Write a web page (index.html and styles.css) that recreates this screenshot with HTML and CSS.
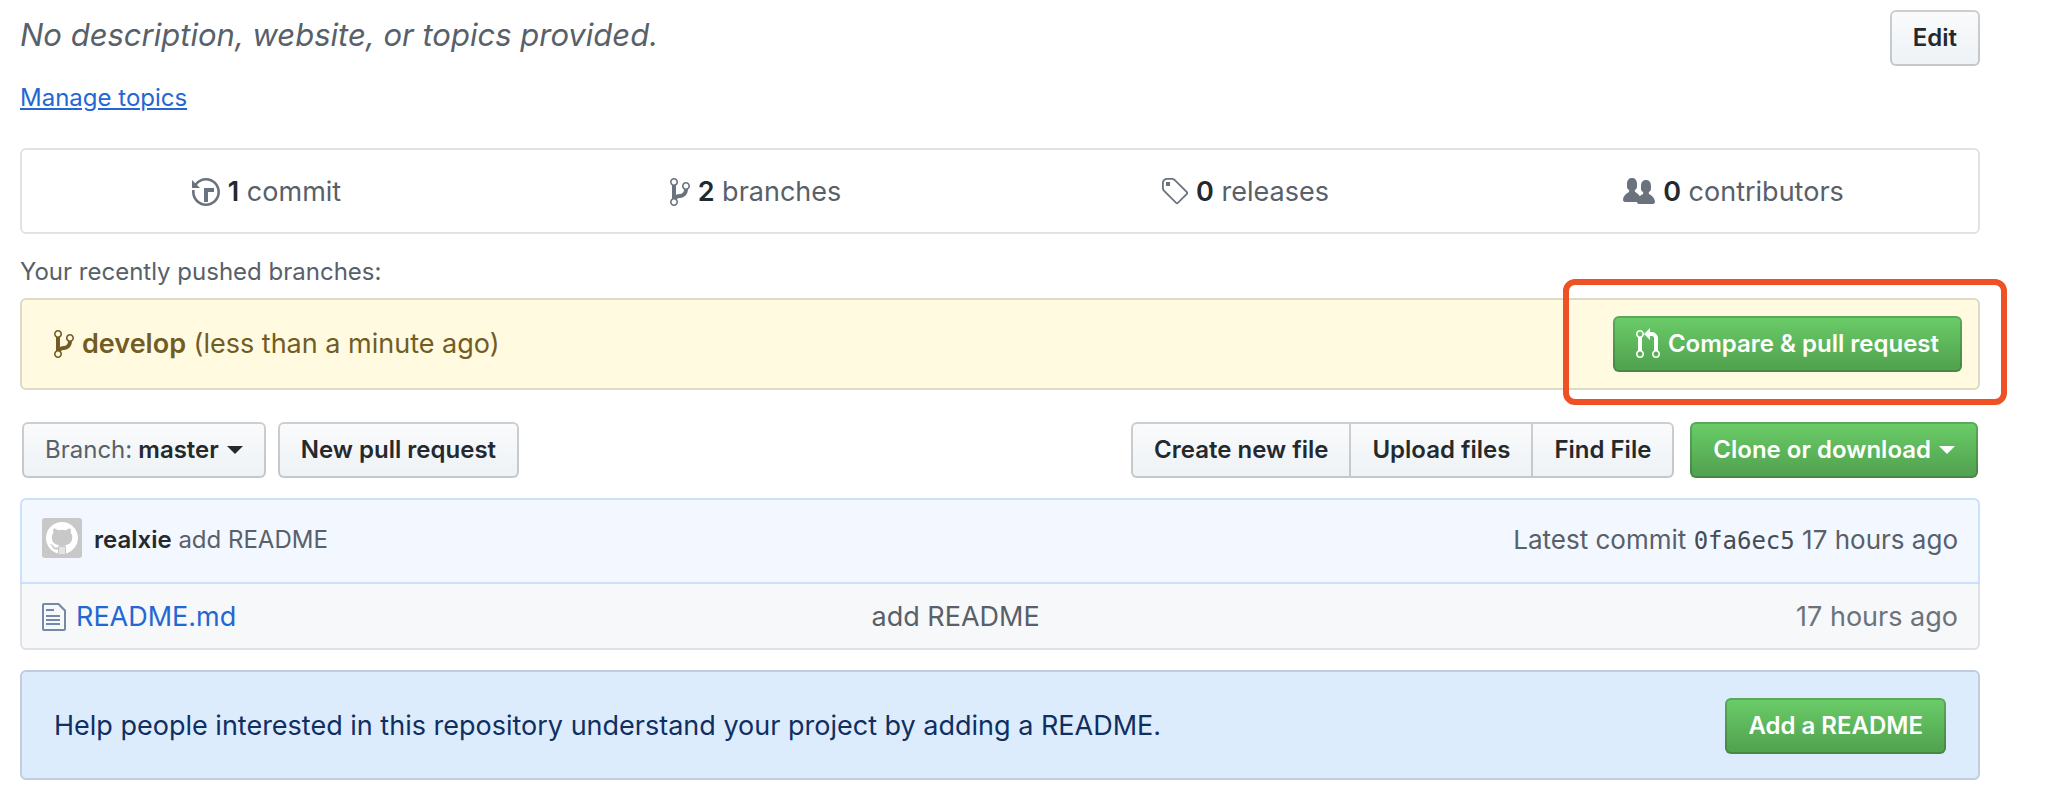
FILE: index.html
```html
<!DOCTYPE html>
<html lang="en">
<head>
<meta charset="utf-8">
<title>Repository</title>
<link rel="stylesheet" href="styles.css">
</head>
<body>
<main class="page">
  <header class="about">
    <div class="about-text">
      <p class="description">No description, website, or topics provided.</p>
      <a class="topics" href="#">Manage topics</a>
    </div>
    <button class="btn" type="button">Edit</button>
  </header>

  <nav class="summary">
    <a class="stat" href="#"><svg class="icon" width="28" height="32" viewBox="0 0 14 16"><path d="M8 13H6V6h5v2H8v5zM7 1C4.81 1 2.87 2.02 1.59 3.59L0 2v4h4L2.5 4.5C3.55 3.17 5.17 2.3 7 2.3c3.14 0 5.7 2.56 5.7 5.7s-2.56 5.7-5.7 5.7A5.71 5.71 0 0 1 1.3 8c0-.34.03-.67.09-1H.08C.03 7.33 0 7.66 0 8c0 3.86 3.14 7 7 7s7-3.14 7-7-3.14-7-7-7z"/></svg><span><b>1</b> commit</span></a>
    <a class="stat" href="#"><svg class="icon" width="20" height="32" viewBox="0 0 10 16"><path d="M10 5c0-1.11-.89-2-2-2a1.993 1.993 0 0 0-1 3.72v.3c-.02.52-.23.98-.63 1.38-.4.4-.86.61-1.38.63-.83.02-1.48.16-2 .45V4.72a1.993 1.993 0 0 0-1-3.72C.88 1 0 1.89 0 3a2 2 0 0 0 1 1.72v6.56c-.59.35-1 .99-1 1.72 0 1.11.89 2 2 2 1.11 0 2-.89 2-2 0-.53-.2-1-.53-1.36.09-.06.48-.41.59-.47.25-.11.56-.17.94-.17 1.05-.05 1.95-.45 2.75-1.25S8.95 7.77 9 6.73h-.02C9.59 6.37 10 5.73 10 5zM2 1.8c.66 0 1.2.55 1.2 1.2 0 .65-.55 1.2-1.2 1.2C1.35 4.2.8 3.65.8 3c0-.65.55-1.2 1.2-1.2zm0 12.41c-.66 0-1.2-.55-1.2-1.2 0-.65.55-1.2 1.2-1.2.65 0 1.2.55 1.2 1.2 0 .65-.55 1.2-1.2 1.2zm6-8c-.66 0-1.2-.55-1.2-1.2 0-.65.55-1.2 1.2-1.2.65 0 1.2.55 1.2 1.2 0 .65-.55 1.2-1.2 1.2z"/></svg><span><b>2</b> branches</span></a>
    <a class="stat" href="#"><svg class="icon" width="28" height="32" viewBox="0 0 14 16"><path d="M7.73 1.73C7.26 1.26 6.62 1 5.96 1H3.5C2.13 1 1 2.13 1 3.5v2.47c0 .66.27 1.3.73 1.77l6.06 6.06c.39.39 1.02.39 1.41 0l4.59-4.59a.996.996 0 0 0 0-1.41L7.73 1.73zM2.38 7.09c-.31-.3-.47-.7-.47-1.13V3.5c0-.88.72-1.59 1.59-1.59h2.47c.42 0 .83.16 1.13.47l6.14 6.13-4.73 4.73-6.13-6.15zM3.01 3h2v2H3V3h.01z"/></svg><span><b>0</b> releases</span></a>
    <a class="stat" href="#"><svg class="icon" width="32" height="32" viewBox="0 0 16 16"><path d="M16 12.999c0 .439-.45 1-1 1H7.995c-.539 0-.994-.447-.995-.999H1c-.54 0-1-.561-1-1 0-2.634 3-4 3-4s.229-.409 0-1c-.841-.621-1.058-.59-1-3 .058-2.419 1.367-3 2.5-3s2.442.58 2.5 3c.058 2.41-.159 2.379-1 3-.229.59 0 1 0 1s1.549.711 2.42 2.088C9.196 9.369 10 8.999 10 8.999s.229-.409 0-1c-.841-.62-1.058-.59-1-3 .058-2.419 1.367-3 2.5-3s2.437.581 2.495 3c.059 2.41-.158 2.38-1 3-.229.59 0 1 0 1s3.005 1.366 3.005 4z"/></svg><span><b>0</b> contributors</span></a>
  </nav>

  <section class="recent">
    <h2 class="recent-title">Your recently pushed branches:</h2>
    <div class="recent-branch">
      <svg class="icon" width="20" height="32" viewBox="0 0 10 16"><path d="M10 5c0-1.11-.89-2-2-2a1.993 1.993 0 0 0-1 3.72v.3c-.02.52-.23.98-.63 1.38-.4.4-.86.61-1.38.63-.83.02-1.48.16-2 .45V4.72a1.993 1.993 0 0 0-1-3.72C.88 1 0 1.89 0 3a2 2 0 0 0 1 1.72v6.56c-.59.35-1 .99-1 1.72 0 1.11.89 2 2 2 1.11 0 2-.89 2-2 0-.53-.2-1-.53-1.36.09-.06.48-.41.59-.47.25-.11.56-.17.94-.17 1.05-.05 1.95-.45 2.75-1.25S8.95 7.77 9 6.73h-.02C9.59 6.37 10 5.73 10 5zM2 1.8c.66 0 1.2.55 1.2 1.2 0 .65-.55 1.2-1.2 1.2C1.35 4.2.8 3.65.8 3c0-.65.55-1.2 1.2-1.2zm0 12.41c-.66 0-1.2-.55-1.2-1.2 0-.65.55-1.2 1.2-1.2.65 0 1.2.55 1.2 1.2 0 .65-.55 1.2-1.2 1.2zm6-8c-.66 0-1.2-.55-1.2-1.2 0-.65.55-1.2 1.2-1.2.65 0 1.2.55 1.2 1.2 0 .65-.55 1.2-1.2 1.2z"/></svg>
      <p class="recent-name"><b>develop</b> (less than a minute ago)</p>
      <div class="callout">
        <button class="btn btn-primary" type="button"><svg class="icon" width="24" height="32" viewBox="0 0 12 16"><path d="M11 11.28V5c-.03-.78-.34-1.47-.94-2.06C9.46 2.35 8.78 2.03 8 2H7V0L4 3l3 3V4h1c.27.02.48.11.69.31.21.2.3.42.31.69v6.28A1.993 1.993 0 0 0 10 15a1.993 1.993 0 0 0 1-3.72zm-1 2.92c-.66 0-1.2-.55-1.2-1.2 0-.65.55-1.2 1.2-1.2.65 0 1.2.55 1.2 1.2 0 .65-.55 1.2-1.2 1.2zM4 3c0-1.11-.89-2-2-2a1.993 1.993 0 0 0-1 3.72v6.56A1.993 1.993 0 0 0 2 15a1.993 1.993 0 0 0 1-3.72V4.72c.59-.34 1-.98 1-1.72zm-.8 10c0 .66-.55 1.2-1.2 1.2-.65 0-1.2-.55-1.2-1.2 0-.65.55-1.2 1.2-1.2.65 0 1.2.55 1.2 1.2zM2 4.2C1.34 4.2.8 3.65.8 3c0-.65.55-1.2 1.2-1.2.65 0 1.2.55 1.2 1.2 0 .65-.55 1.2-1.2 1.2z"/></svg>Compare &amp; pull request</button>
      </div>
    </div>
  </section>

  <div class="toolbar">
    <button class="btn" type="button"><span><span class="btn-label">Branch:</span> master</span><span class="caret"></span></button>
    <button class="btn" type="button">New pull request</button>
    <div class="btn-group">
      <button class="btn" type="button">Create new file</button>
      <button class="btn" type="button">Upload files</button>
      <button class="btn" type="button">Find File</button>
    </div>
    <button class="btn btn-primary btn-clone" type="button">Clone or download<span class="caret"></span></button>
  </div>

  <section class="files">
    <div class="commit">
      <svg class="avatar" width="40" height="40" viewBox="0 0 40 40"><rect width="40" height="40" rx="3" fill="#c8c8c8"/><path fill="#fff" transform="translate(4 4)scale(2)" d="M8 0C3.58 0 0 3.58 0 8c0 3.54 2.29 6.53 5.47 7.59.4.07.55-.17.55-.38 0-.19-.01-.82-.01-1.49-2.01.37-2.53-.49-2.69-.94-.09-.23-.48-.94-.82-1.13-.28-.15-.68-.52-.01-.53.63-.01 1.08.58 1.23.82.72 1.21 1.87.87 2.33.66.07-.52.28-.87.51-1.07-1.78-.2-3.64-.89-3.64-3.95 0-.87.31-1.59.82-2.15-.08-.2-.36-1.02.08-2.12 0 0 .67-.21 2.2.82.64-.18 1.32-.27 2-.27.68 0 1.36.09 2 .27 1.53-1.04 2.2-.82 2.2-.82.44 1.1.16 1.92.08 2.12.51.56.82 1.27.82 2.15 0 3.07-1.87 3.75-3.65 3.95.29.25.54.73.54 1.48 0 1.07-.01 1.93-.01 2.2 0 .21.15.46.55.38A8.013 8.013 0 0 0 16 8c0-4.42-3.58-8-8-8z"/><path stroke="#fff" stroke-width="1" d="M18 29v7M20 29v7M22 29v7"/></svg>
      <p class="commit-message"><a class="author" href="#">realxie</a> add README</p>
      <p class="commit-latest">Latest commit <a class="sha" href="#">0fa6ec5</a> 17 hours ago</p>
    </div>
    <table class="file-table">
      <tr>
        <td class="file-name"><span class="file-cell"><svg class="file-icon" width="24" height="32" viewBox="0 0 12 16"><path d="M6 5H2V4h4v1zM2 8h7V7H2v1zm0 2h7V9H2v1zm0 2h7v-1H2v1zm10-7.5V14c0 .55-.45 1-1 1H1c-.55 0-1-.45-1-1V2c0-.55.45-1 1-1h7.5L12 4.5zM11 5L8 2H1v12h10V5z"/></svg><a class="file-link" href="#">README.md</a></span></td>
        <td class="file-message">add README</td>
        <td class="file-age">17 hours ago</td>
      </tr>
    </table>
  </section>

  <section class="help">
    <p class="help-text">Help people interested in this repository understand your project by adding a README.</p>
    <button class="btn btn-primary" type="button">Add a README</button>
  </section>
</main>
</body>
</html>
```
FILE: styles.css
```css
* {
  box-sizing: border-box;
}

body {
  margin: 0;
  background: #fff;
  color: #24292e;
  font-family: Inter, "Liberation Sans", sans-serif;
  font-size: 27px;
  line-height: 40px;
}

p,
h2 {
  margin: 0;
}

b {
  font-weight: 600;
}

a {
  color: inherit;
  text-decoration: none;
}

.page {
  padding: 10px 78px 24px 20px;
}

.icon,
.file-icon,
.avatar {
  display: block;
  flex: none;
  fill: currentColor;
}

.btn {
  display: inline-flex;
  align-items: center;
  gap: 8px;
  height: 56px;
  padding: 0 21px;
  border: 2px solid rgba(27, 31, 35, 0.2);
  border-radius: 6px;
  background: linear-gradient(#fafbfc, #eff3f6 90%);
  background-clip: border-box;
  background-origin: border-box;
  color: #24292e;
  font-family: inherit;
  font-size: 24px;
  font-weight: 600;
  line-height: 40px;
  white-space: nowrap;
}

.btn-primary {
  background-image: linear-gradient(#6bcd69, #52a44f 90%);
  color: #fff;
}

.btn-label {
  color: #586069;
  font-weight: 400;
}

.caret {
  border: 8px solid transparent;
  border-top-color: currentColor;
  border-bottom: 0;
}

.about {
  display: flex;
  align-items: flex-start;
  justify-content: space-between;
}

.description {
  color: #586069;
  font-size: 31px;
  font-style: italic;
  line-height: 50px;
}

.topics {
  display: block;
  margin-top: 20px;
  color: #2467d3;
  font-size: 24px;
  line-height: 36px;
  text-decoration: underline;
}

.summary {
  display: grid;
  grid-template-columns: repeat(4, 1fr);
  margin-top: 32px;
  border: 2px solid #e1e2e7;
  border-radius: 6px;
}

.stat {
  display: flex;
  align-items: center;
  justify-content: center;
  gap: 8px;
  height: 82px;
  padding-top: 2px;
  color: #586069;
}

.stat b {
  color: #24292e;
}

.stat .icon {
  color: #6a737d;
}

.recent-title {
  margin-top: 20px;
  color: #586069;
  font-size: 24px;
  font-weight: 400;
  line-height: 36px;
}

.recent-branch {
  display: flex;
  align-items: center;
  gap: 8px;
  height: 92px;
  margin-top: 8px;
  padding: 0 16px 0 32px;
  border: 2px solid #dedbc4;
  border-radius: 6px;
  background: #fffae0;
  color: #735c24;
}

.recent-name {
  flex: 1;
}

.callout {
  position: relative;
}

.callout::after {
  content: "";
  position: absolute;
  inset: -37px -45px -33px -50px;
  border: 6px solid #ee5126;
  border-radius: 12px;
  pointer-events: none;
}

.toolbar {
  display: flex;
  gap: 12px;
  margin-top: 32px;
  padding: 0 2px;
}

.btn-group {
  display: flex;
  margin-left: auto;
}

.btn-group .btn {
  border-radius: 0;
}

.btn-group .btn + .btn {
  border-left: 0;
}

.btn-group .btn:first-child {
  border-radius: 6px 0 0 6px;
}

.btn-group .btn:last-child {
  border-radius: 0 6px 6px 0;
}

.btn-clone {
  margin-left: 4px;
}

.files {
  margin-top: 20px;
}

.commit {
  display: flex;
  align-items: flex-start;
  height: 86px;
  padding: 18px 20px 0;
  border: 2px solid #cae0fd;
  border-radius: 6px 6px 0 0;
  background: #f3f7ff;
  color: #586069;
  font-size: 24px;
  line-height: 44px;
}

.commit-message {
  flex: 1;
  padding-left: 12px;
}

.author {
  color: #24292e;
  font-weight: 600;
}

.commit-latest {
  font-size: 26px;
}

.sha {
  color: #444d56;
  font-family: "DejaVu Sans Mono", monospace;
  font-size: 24px;
}

.file-table {
  width: 100%;
  border: 2px solid #dfe1e5;
  border-top: 0;
  border-radius: 0 0 6px 6px;
  border-spacing: 0;
  background: #f7f8fa;
}

.file-table td {
  height: 64px;
  padding: 2px 20px 0;
}

.file-table .file-message {
  padding-left: 28px;
  color: #586069;
}

.file-name {
  width: 42%;
}

.file-cell {
  display: flex;
  align-items: center;
  gap: 10px;
}

.file-icon {
  color: #7489a8;
}

.file-link {
  color: #2467d3;
}

.file-age {
  color: #6a737d;
  text-align: right;
}

.help {
  display: flex;
  align-items: center;
  justify-content: space-between;
  height: 110px;
  margin-top: 20px;
  padding: 2px 32px 0;
  border: 2px solid #bfcddc;
  border-radius: 6px;
  background: #ddecfd;
  color: #0f2f62;
}
```
